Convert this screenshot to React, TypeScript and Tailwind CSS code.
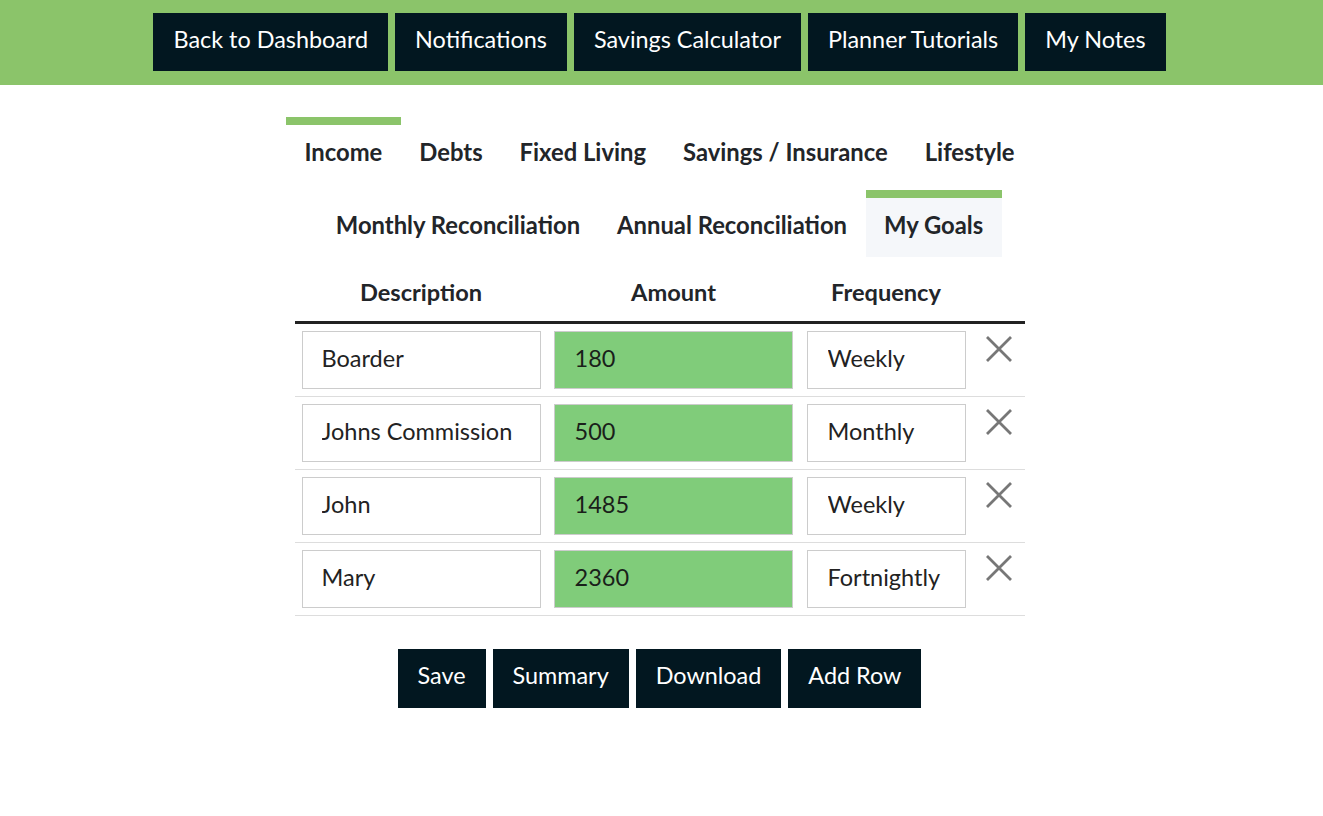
import React from "react";

const topButtons = ["Back to Dashboard", "Notifications", "Savings Calculator", "Planner Tutorials", "My Notes"];
const tabsRow1 = ["Income", "Debts", "Fixed Living", "Savings / Insurance", "Lifestyle"];
const tabsRow2 = ["Monthly Reconciliation", "Annual Reconciliation", "My Goals"];
const rows = [
  { d: "Boarder", a: "180", f: "Weekly" },
  { d: "Johns Commission", a: "500", f: "Monthly" },
  { d: "John", a: "1485", f: "Weekly" },
  { d: "Mary", a: "2360", f: "Fortnightly" },
];

function Tab({ label, active, hover }: { label: string; active?: boolean; hover?: boolean }) {
  return (
    <div
      className={
        "border-t-8 px-[18.5px] pt-[13px] pb-[17px] text-[23.8px] font-bold leading-[29px] text-[#222529] " +
        (active ? "border-[#8bc46a] " : "border-transparent ") +
        (hover ? "bg-[#f5f7fa]" : "")
      }
    >
      {label}
    </div>
  );
}

function XIcon() {
  return (
    <svg width="28" height="28" viewBox="0 0 28 28">
      <path d="M2 2 L26 26 M26 2 L2 26" stroke="#777777" strokeWidth="2.8" strokeLinecap="butt" fill="none" />
    </svg>
  );
}

export default function App() {
  return (
    <div className="min-h-[816px] bg-white" style={{ fontFamily: "Lato, 'Noto Sans', sans-serif" }}>
      <div className="flex h-[85px] justify-center gap-[7px] bg-[#8bc46a] pt-[13px] pr-[4px]">
        {topButtons.map((b) => (
          <div key={b} className="flex h-[58px] items-center bg-[#021720] px-5 pb-[5px] text-[23.4px] leading-none text-white">
            {b}
          </div>
        ))}
      </div>
      <div className="flex flex-col items-center pt-[32px] pr-[4px]">
        <div className="flex">
          {tabsRow1.map((t, i) => (
            <Tab key={t} label={t} active={i === 0} />
          ))}
        </div>
        <div className="mt-[6px] flex">
          {tabsRow2.map((t, i) => (
            <Tab key={t} label={t} active={i === 2} hover={i === 2} />
          ))}
        </div>
        <div className="mt-[7px] w-[730px]">
          <div className="grid h-[60px] grid-cols-[253px_252px_173px_52px] items-center border-b-[3px] border-[#222222] text-[23.6px] font-bold text-[#222529]">
            <div className="text-center">Description</div>
            <div className="text-center">Amount</div>
            <div className="text-center">Frequency</div>
            <div />
          </div>
          {rows.map((r) => (
            <div key={r.d} className="grid grid-cols-[253px_252px_173px_52px] border-b border-[#dddddd]">
              <div className="px-[7px] py-[7px]">
                <input
                  readOnly
                  value={r.d}
                  className="h-[58px] w-full border border-[#cccccc] bg-white pb-[4px] pl-[19px] text-[23.5px] text-[#222222] outline-none"
                />
              </div>
              <div className="py-[7px] pl-[6px] pr-[7px]">
                <input
                  readOnly
                  value={r.a}
                  className="h-[58px] w-full border border-[#cccccc] bg-[#80cc7a] pb-[4px] pl-[20px] text-[23.5px] text-[#1a1f1a] outline-none"
                />
              </div>
              <div className="px-[7px] py-[7px]">
                <input
                  readOnly
                  value={r.f}
                  className="h-[58px] w-full border border-[#cccccc] bg-white pb-[4px] pl-[20px] text-[23.5px] text-[#222222] outline-none"
                />
              </div>
              <div className="flex justify-center pt-[11px]">
                <XIcon />
              </div>
            </div>
          ))}
        </div>
        <div className="mt-[33px] flex gap-[7px]">
          {["Save", "Summary", "Download", "Add Row"].map((b) => (
            <div key={b} className="flex h-[59px] items-center bg-[#021720] px-5 pb-[5px] text-[23.4px] leading-none text-white">
              {b}
            </div>
          ))}
        </div>
      </div>
    </div>
  );
}
